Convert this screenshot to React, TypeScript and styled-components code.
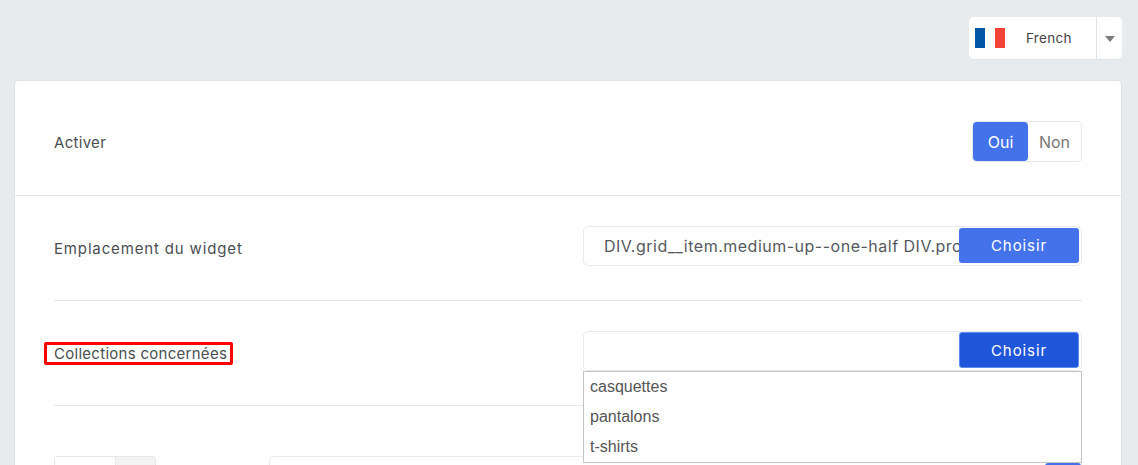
import React from 'react';
import styled, { createGlobalStyle } from 'styled-components';

const Global = createGlobalStyle`
    html, body {
        margin:0;
        padding:0;
        height:465px;
        overflow:hidden;
        background:#e7ebee;
        font-family:"Inter", "Liberation Sans", sans-serif;
    }
    * { box-sizing:border-box; }
`;

const Page = styled.div`
    height:465px;
    padding:17px 16px 0 14px;
    overflow:hidden;
`;

const TopBar = styled.div`
    display:flex;
    justify-content:flex-end;
    margin-bottom:20px;
`;

const LangSelect = styled.div`
    display:flex;
    width:153px;
    height:43px;
    background:#fff;
    border-radius:5px;
    border-bottom:1px solid #dfe3e8;
`;

const LangMain = styled.div`
    flex:1;
    display:flex;
    align-items:center;
    padding-left:6px;
    border-right:1px solid #dfe3e8;
`;

const Flag = styled.svg`
    width:30px;
    height:20px;
    flex:none;
`;

const LangName = styled.span`
    margin-left:21px;
    font-size:13.5px;
    letter-spacing:0.3px;
    color:#444;
`;

const LangArrow = styled.div`
    width:25px;
    display:flex;
    align-items:center;
    justify-content:center;
    &::after{
        content:"";
        border-left:5px solid transparent;
        border-right:5px solid transparent;
        border-top:6px solid #7c7c7c;
        margin-top:1px;
    }
`;

const Card = styled.div`
    background:#fff;
    border:1px solid #dfe3e8;
    border-bottom:0;
    border-radius:5px 5px 0 0;
    height:400px;
    overflow:hidden;
`;

const ToggleSection = styled.div`
    display:flex;
    align-items:center;
    justify-content:space-between;
    height:115px;
    padding:7px 39px 0;
    border-bottom:1px solid #e5e7ea;
`;

const Body = styled.div`
    padding:0 39px;
`;

const Row = styled.div`
    display:flex;
    align-items:center;
    justify-content:space-between;
    height:105px;
    border-bottom:1px solid #e5e7ea;
`;

const Label = styled.label<{ $tracking: number }>`
    font-size:15px;
    letter-spacing:${p => p.$tracking}px;
    color:#4a4e52;
`;

const ToggleLabel = styled(Label)`
    margin-top:2px;
`;

const Highlighted = styled(Label)`
    position:relative;
    &::before{
        content:"";
        position:absolute;
        left:-10px;
        right:-6px;
        top:-2px;
        bottom:-2px;
        border:3px solid #f00;
        border-radius:2px;
    }
`;

const Toggle = styled.div`
    display:flex;
    width:110px;
    height:41px;
    border:1px solid #e5e7ea;
    border-radius:4px;
    font-size:16px;
`;

const ToggleOption = styled.div<{ $active?: boolean }>`
    width:${p => (p.$active ? '55px' : '53px')};
    display:flex;
    align-items:center;
    justify-content:center;
    border-radius:4px;
    background:${p => (p.$active ? '#4372ea' : 'transparent')};
    color:${p => (p.$active ? '#fff' : '#777')};
`;

const Field = styled.div`
    position:relative;
    display:flex;
    align-items:center;
    width:499px;
    height:40px;
    margin-bottom:4px;
    border:1px solid #e8eaed;
    border-radius:5px;
    background:#fff;
`;

const FieldValue = styled.div`
    flex:1;
    min-width:0;
    padding-left:20px;
    font-size:16px;
    letter-spacing:0.5px;
    color:#55595d;
    white-space:nowrap;
    overflow:hidden;
`;

const ChooseButton = styled.button<{ $pressed?: boolean }>`
    flex:none;
    width:120px;
    height:${p => (p.$pressed ? '36px' : '35px')};
    margin:${p => (p.$pressed ? '0 2px 2px 0' : '0 2px 1px 0')};
    padding:0;
    border:${p => (p.$pressed ? '1px solid #5c8cf0' : '0')};
    border-radius:3px;
    background:${p => (p.$pressed ? '#1f55d9' : '#4372ea')};
    color:#fff;
    font:400 15px "Inter", "Liberation Sans", sans-serif;
    letter-spacing:0.9px;
`;

const Suggestions = styled.ul`
    position:absolute;
    top:39px;
    left:-1px;
    width:499px;
    height:92px;
    margin:0;
    padding:0;
    list-style:none;
    background:#fff;
    border:1px solid #c4c4c4;
    z-index:2;
`;

const Suggestion = styled.li`
    height:30px;
    padding-left:6px;
    font:16px/30px "Liberation Sans", Arial, sans-serif;
    color:#555;
`;

const LastRow = styled.div`
    display:flex;
    align-items:flex-start;
    padding-top:50px;
`;

const TabGroup = styled.div`
    display:flex;
    width:102px;
    height:40px;
    border:1px solid #e5e7ea;
    border-radius:3px;
`;

const TabCell = styled.div<{ $muted?: boolean }>`
    width:${p => (p.$muted ? '40px' : '61px')};
    background:${p => (p.$muted ? '#f3f3f3' : '#fff')};
    border-left:${p => (p.$muted ? '1px solid #e5e7ea' : '0')};
`;

const WideField = styled.div`
    display:flex;
    justify-content:flex-end;
    width:813px;
    height:40px;
    margin-left:113px;
    border:1px solid #e8eaed;
    border-radius:5px;
`;

const WideButton = styled.div`
    width:36px;
    height:36px;
    margin-top:6px;
    background:#4372ea;
    border-radius:3px;
`;

export default function App() {
    return (
        <Page>
            <Global />
            <TopBar>
                <LangSelect>
                    <LangMain>
                        <Flag viewBox="0 0 30 20">
                            <rect width="10" height="20" fill="#0055a4" />
                            <rect x="10" width="10" height="20" fill="#fff" />
                            <rect x="20" width="10" height="20" fill="#f44336" />
                        </Flag>
                        <LangName>French</LangName>
                    </LangMain>
                    <LangArrow />
                </LangSelect>
            </TopBar>
            <Card>
                <ToggleSection>
                    <ToggleLabel $tracking={0.3}>Activer</ToggleLabel>
                    <Toggle>
                        <ToggleOption $active>Oui</ToggleOption>
                        <ToggleOption>Non</ToggleOption>
                    </Toggle>
                </ToggleSection>
                <Body>
                    <Row>
                        <Label $tracking={0.85}>Emplacement du widget</Label>
                        <Field>
                            <FieldValue>DIV.grid__item.medium-up--one-half DIV.product-single</FieldValue>
                            <ChooseButton>Choisir</ChooseButton>
                        </Field>
                    </Row>
                    <Row>
                        <Highlighted $tracking={0.28}>Collections concernées</Highlighted>
                        <Field>
                            <FieldValue />
                            <ChooseButton $pressed>Choisir</ChooseButton>
                            <Suggestions>
                                <Suggestion>casquettes</Suggestion>
                                <Suggestion>pantalons</Suggestion>
                                <Suggestion>t-shirts</Suggestion>
                            </Suggestions>
                        </Field>
                    </Row>
                    <LastRow>
                        <TabGroup>
                            <TabCell />
                            <TabCell $muted />
                        </TabGroup>
                        <WideField>
                            <WideButton />
                        </WideField>
                    </LastRow>
                </Body>
            </Card>
        </Page>
    );
}
